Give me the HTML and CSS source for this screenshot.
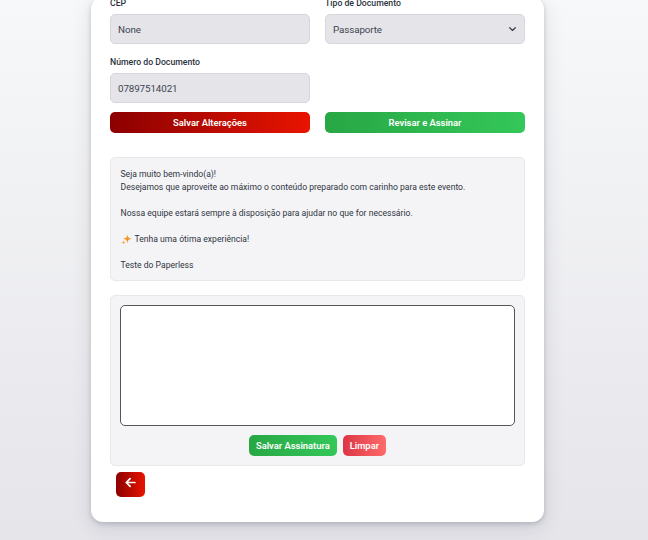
FILE: index.html
```html
<!DOCTYPE html>
<html lang="pt-BR">
<head>
<meta charset="utf-8">
<title>Formulário</title>
<link rel="stylesheet" href="styles.css">
</head>
<body>
<main class="card">
  <form class="form-grid">
    <div class="field field-top">
      <label class="label">CEP</label>
      <div class="control">None</div>
    </div>
    <div class="field field-top">
      <label class="label">Tipo de Documento</label>
      <div class="control">
        <span>Passaporte</span>
        <svg class="chevron" viewBox="0 0 10 6" width="7" height="4.2"><path d="M1 1l4 4 4-4" fill="none" stroke="#374151" stroke-width="1.8" stroke-linecap="round" stroke-linejoin="round"/></svg>
      </div>
    </div>
    <div class="field">
      <label class="label">Número do Documento</label>
      <div class="control">07897514021</div>
    </div>
    <div class="field"></div>
    <button type="button" class="btn btn-red">Salvar Alterações</button>
    <button type="button" class="btn btn-green">Revisar e Assinar</button>
  </form>

  <section class="message">
    <p>Seja muito bem-vindo(a)!<br>Desejamos que aproveite ao máximo o conteúdo preparado com carinho para este evento.</p>
    <p>Nossa equipe estará sempre à disposição para ajudar no que for necessário.</p>
    <p class="sparkle-line">
      <svg class="sparkle" viewBox="0 0 12 12" width="11" height="11"><path d="M7 .4C7.4 3.8 8.4 4.8 11.8 5.3 8.4 5.9 7.4 6.9 7 10.3 6.6 6.9 5.5 5.9 2.2 5.3 5.5 4.8 6.6 3.8 7 .4Z" fill="#f59427"/><path d="M2.8 6.8C3 8.5 3.5 9 5.4 9.3 3.5 9.6 3 10.1 2.8 11.8 2.6 10.1 2 9.6.1 9.3 2 9 2.6 8.5 2.8 6.8Z" fill="#f7a64d"/></svg>
      <span>Tenha uma ótima experiência!</span>
    </p>
    <p>Teste do Paperless</p>
  </section>

  <section class="signature">
    <div class="canvas"></div>
    <div class="signature-actions">
      <button type="button" class="btn btn-small btn-green">Salvar Assinatura</button>
      <button type="button" class="btn btn-small btn-pink">Limpar</button>
    </div>
  </section>

  <button type="button" class="back" aria-label="Voltar">
    <svg viewBox="0 0 12 12" width="11" height="11"><path d="M10.8 6H1.4M5.6 1.8 1.4 6l4.2 4.2" fill="none" stroke="#ffffff" stroke-width="1.9" stroke-linecap="round" stroke-linejoin="round"/></svg>
  </button>
</main>
</body>
</html>
```

FILE: styles.css
```css
* { box-sizing: border-box; }

html, body { height: 100%; }

body {
  margin: 0;
  height: 540px;
  overflow: hidden;
  display: flex;
  flex-direction: column;
  justify-content: flex-end;
  align-items: flex-start;
  padding: 0 0 18px 90.5px;
  background: linear-gradient(180deg, #f7f8f9 0%, #e5e5ea 100%);
  font-family: Roboto, "Noto Sans", sans-serif;
  color: #1f2937;
}

.card {
  width: 453.5px;
  flex: none;
  padding: 0 19px 25px 19.5px;
  background: #ffffff;
  border-radius: 12px;
  box-shadow: 0 2px 5px rgba(60, 60, 80, 0.22), 0 6px 20px rgba(60, 60, 80, 0.14);
}

.form-grid {
  display: grid;
  grid-template-columns: 200px 200px;
  column-gap: 15px;
  row-gap: 9px;
  margin-bottom: 24px;
}

.field { display: flex; flex-direction: column; }
.field-top { margin-bottom: 3px; }

.label {
  font-size: 8.7px;
  line-height: 13px;
  font-weight: 500;
  color: #2b3340;
  margin-bottom: 4px;
}

.control {
  height: 30px;
  display: flex;
  align-items: center;
  justify-content: space-between;
  padding: 0 8.5px 0 7px;
  background: #e4e4e9;
  border: 1px solid #d6d7dc;
  border-radius: 5px;
  font-size: 9.8px;
  letter-spacing: -0.1px;
  color: #3f4550;
}

.btn {
  border: 0;
  font-family: inherit;
  font-weight: 600;
  color: #ffffff;
  height: 21px;
  font-size: 9.4px;
  border-radius: 5px;
  padding: 0;
}

.btn-red { background: linear-gradient(90deg, #8b0000, #e81400); }
.btn-green { background: linear-gradient(90deg, #28a745, #34c759); }
.btn-pink { background: linear-gradient(90deg, #dc3545, #ff6b6b); }

.btn-small { padding: 0 7px; }

.message {
  height: 124px;
  padding: 10px 9.5px 6px;
  background: #f4f4f7;
  border: 1px solid #e8e8ec;
  border-radius: 5px;
  font-size: 8.6px;
  line-height: 13px;
  color: #2f3540;
  margin-bottom: 14px;
}

.message p { margin: 0 0 13px; }
.message p:last-child { margin-bottom: 0; }

.sparkle-line { display: flex; align-items: center; gap: 3px; }

.signature {
  padding: 9px 9px;
  background: #f4f4f7;
  border: 1px solid #e8e8ec;
  border-radius: 5px;
  margin-bottom: 6px;
}

.canvas {
  height: 121px;
  background: #ffffff;
  border: 1px solid #55555a;
  border-radius: 5px;
  margin-bottom: 9px;
}

.signature-actions { display: flex; justify-content: center; gap: 6px; }

.back {
  display: flex;
  align-items: flex-start;
  justify-content: center;
  width: 29px;
  height: 25px;
  margin-left: 6px;
  padding: 4.5px 0 0;
  border: 0;
  border-radius: 5px;
  background: linear-gradient(90deg, #8b0000, #e81400);
}
```
